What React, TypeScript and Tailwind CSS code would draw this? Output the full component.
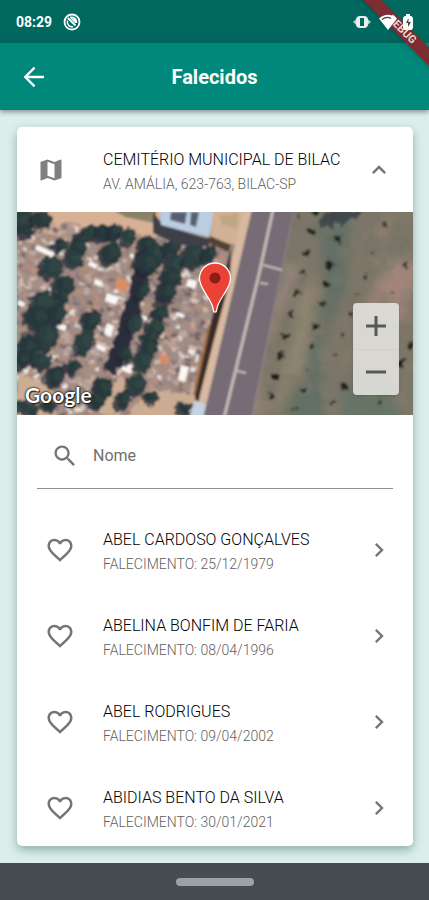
import React from "react";

type Person = { name: string; date: string };

const people: Person[] = [
  { name: "ABEL CARDOSO GONÇALVES", date: "25/12/1979" },
  { name: "ABELINA BONFIM DE FARIA", date: "08/04/1996" },
  { name: "ABEL RODRIGUES", date: "09/04/2002" },
  { name: "ABIDIAS BENTO DA SILVA", date: "30/01/2021" },
];

// Tree crowns: x, y, rx, ry
const trees: [number, number, number, number][] = [
  [24, 220, 12, 12], [42, 219, 12, 9], [26, 231, 10, 6],
  [92, 232, 9, 8], [104, 233, 9, 9], [116, 232, 9, 9], [129, 236, 8, 9], [82, 238, 8, 8],
  [78, 247, 10, 10], [75, 259, 10, 9], [112, 253, 11, 12], [61, 245, 6, 8], [52, 267, 12, 12],
  [65, 285, 11, 11], [62, 297, 9, 8], [44, 302, 13, 12], [38, 317, 13, 12], [58, 315, 9, 12],
  [48, 337, 12, 13], [29, 346, 11, 11], [24, 359, 9, 10], [42, 360, 11, 9], [56, 376, 10, 12],
  [92, 320, 10, 11], [85, 342, 10, 14], [74, 367, 8, 8],
  [148, 246, 10, 12], [157, 253, 11, 12], [147, 263, 13, 12], [172, 248, 9, 9], [176, 264, 11, 10],
  [172, 277, 12, 10], [167, 292, 11, 10], [195, 255, 12, 14], [210, 254, 8, 10],
  [143, 290, 7, 12], [136, 323, 8, 11], [126, 354, 9, 8],
  [161, 314, 9, 9], [156, 327, 10, 10], [151, 338, 10, 10], [149, 349, 10, 9], [144, 361, 10, 11],
  [104, 388, 11, 12], [97, 400, 8, 9], [138, 384, 11, 11], [124, 399, 8, 11], [152, 397, 8, 7],
  [28, 407, 13, 7], [50, 405, 9, 6], [186, 408, 9, 7],
];

// Shrubs on the field: x, y, radius
const shrubs: [number, number, number][] = [
  [311, 232, 4], [337, 239, 4], [306, 253, 3], [330, 265, 5], [303, 273, 3], [326, 284, 4],
  [297, 294, 3], [322, 304, 3], [291, 315, 4], [315, 327, 4], [286, 336, 4], [312, 346, 3],
  [280, 356, 4], [262, 365, 2], [276, 376, 4], [271, 396, 4], [303, 390, 3], [344, 386, 4],
  [332, 404, 2], [307, 369, 1], [343, 335, 2], [335, 354, 2], [350, 314, 2], [357, 295, 2],
  [365, 276, 2], [373, 253, 2], [406, 265, 4], [410, 345, 4], [401, 363, 4], [380, 403, 2],
  [393, 292, 2], [384, 225, 2], [298, 217, 2], [315, 212, 4], [295, 410, 2],
];

const graveColors = ["#c8aa9b", "#99847d", "#dcc4b5", "#ae8c7c", "#84767a", "#bda9a4", "#f0e8e3", "#a5928c", "#bd9080", "#6b5d60"];

function noise(n: number) {
  const v = Math.sin(n * 127.1 + 11.7) * 43758.5453;
  return v - Math.floor(v);
}

const graves = Array.from({ length: 1900 }, (_, i) => {
  const col = i % 38;
  const row = Math.floor(i / 38);
  return {
    x: col * 7 + noise(i) * 3,
    y: row * 5 + noise(i + 3000) * 2,
    w: 3 + noise(i + 6000) * 5,
    h: 2 + noise(i + 9000) * 2.5,
    fill: graveColors[Math.floor(noise(i + 700) * graveColors.length)],
  };
});

const patches = Array.from({ length: 260 }, (_, i) => ({
  x: 250 + noise(i + 51) * 165,
  y: 210 + noise(i + 922) * 206,
  r: 2 + noise(i + 77) * 9,
  fill: ["#6f7264", "#8d8173", "#617064", "#7a7364", "#a08578"][i % 5],
}));

function SatelliteMap() {
  return (
    <svg viewBox="17 212 396 203" preserveAspectRatio="xMidYMid slice" className="block h-full w-full" role="img" aria-label="Mapa">
      <defs>
        <filter id="soft" x="-5%" y="-5%" width="110%" height="110%">
          <feGaussianBlur stdDeviation="0.8" />
        </filter>
        <filter id="haze" x="-30%" y="-30%" width="160%" height="160%">
          <feGaussianBlur stdDeviation="5" />
        </filter>
        <filter id="rough" x="-5%" y="-5%" width="110%" height="110%">
          <feTurbulence type="fractalNoise" baseFrequency="0.16" numOctaves="2" seed="4" result="n" />
          <feDisplacementMap in="SourceGraphic" in2="n" scale="9" xChannelSelector="R" yChannelSelector="G" />
        </filter>
        <clipPath id="field">
          <path d="M295 208H420V420H252Z" />
        </clipPath>
        <clipPath id="cemetery">
          <path d="M10 228L70 222L150 236L226 255L192 420H10Z" />
        </clipPath>
      </defs>
      <g filter="url(#soft)">
        <rect x="10" y="205" width="410" height="220" fill="#a08b83" />
        <path d="M45 205H170L155 240L120 232L80 228L60 236L30 230Z" fill="#d8b096" />
        <path d="M110 208H157L154 223L125 217Z" fill="#8a8266" />
        <g clipPath="url(#cemetery)">
          <g transform="rotate(18 120 310) translate(-20 185)" filter="url(#rough)">
            {graves.map((g, i) => (
              <rect key={i} x={g.x} y={g.y} width={g.w} height={g.h} fill={g.fill} />
            ))}
          </g>
        </g>
        <g fill="#fbf7f5">
          <path d="M37 245l18 8-2 5-18-9zM90 261l8 4-2 4-8-4zM95 279l8 3-2 5-7-3zM107 293l12 4-3 8-11-4zM59 323l8 3-2 5-8-3zM107 323l7 3-3 11-7-3zM188 279l9 2-2 8-9-3zM138 314l10 3-2 4-9-3zM97 344l9 4-2 4-8-4zM177 312l8 3-2 3-8-3zM181 365l8 2-4 15-7-2zM123 362l11 4-3 8-10-4zM19 300l6 3-2 4-6-3zM131 253l6 3-2 4-5-3z" />
        </g>
        <path d="M117 277l12 4-2 11-12-3zM160 353l10 4-2 7-9-3z" fill="#d98c69" />
        <g filter="url(#rough)">
          <path d="M17 372L38 381L60 396L55 418H17ZM90 405L118 378L130 382L112 418ZM150 388L200 397L196 418H125Z" fill="#ccad93" />
          <path d="M138 250L156 256L130 345L115 375L103 370L126 305Z" fill="#2c2d3b" />
          <path d="M167 265L182 268L168 310L145 372L139 365L152 310Z" fill="#2d3338" opacity="0.8" />
          <path d="M20 335L60 305L48 356L26 370Z" fill="#27343a" opacity="0.5" />
          {trees.map(([x, y, rx, ry], i) => (
            <g key={i} transform={`rotate(20 ${x} ${y})`}>
              <ellipse cx={x - 2} cy={y + 3} rx={rx} ry={ry} fill="#262c38" opacity="0.8" />
              <ellipse cx={x} cy={y} rx={rx - 1} ry={ry - 1} fill={i % 3 === 0 ? "#2b3f3f" : "#26373a"} />
              <ellipse cx={x + 2} cy={y - 2} rx={rx / 2} ry={ry / 2} fill="#3b504c" opacity="0.35" />
            </g>
          ))}
        </g>
        <path d="M153 212L163 225L205 238H213L208 246L178 245L153 233Z" fill="#3d4048" />
        <path d="M160 205H216L209 237L161 225Z" fill="#b9cee2" />
        <path d="M171 212H187L185 224L170 220ZM191 212H199L196 227L190 225Z" fill="#59606f" />
        <path d="M214 205H254L240 246L210 239Z" fill="#d2b195" />
        <path d="M219 216L239 213L237 228L222 225Z" fill="#ad9d72" opacity="0.5" />
        <path d="M210 236L231 245L228 252L209 243Z" fill="#514332" />
        {/* Pavement and avenue */}
        <path d="M245 205H256L208 418H192L228 275Z" fill="#d8b9a1" />
        <path d="M231 247L224 275L211 322L195 395L196 415L200 395L214 340L230 280Z" fill="#3c2c25" />
        <path d="M209 325L194 395" stroke="#a66f3b" strokeWidth="2" />
        <path d="M195 400L207 405L204 418H189Z" fill="#c4d3e1" />
        <path d="M253 205H297L252 418H203L211 385Z" fill="#776c75" />
        <path d="M274 205L260 270L224 418" fill="none" stroke="#cabbb7" strokeWidth="3" />
        <path d="M295 208L252 418" stroke="#93838a" strokeWidth="2" />
        <path d="M263 265L282 270M260 283L268 284M237 371L246 373" stroke="#c9bdbb" strokeWidth="2" />
        {/* Field beyond the avenue */}
        <g clipPath="url(#field)">
          <rect x="250" y="205" width="170" height="215" fill="#7c7668" />
          <g filter="url(#haze)">
            <path d="M318 215L352 205L345 290L320 345L325 420L285 418L325 300Z" fill="#626f65" />
            <path d="M390 255L420 265L405 320L360 320Z" fill="#a2857a" />
            <path d="M340 390L380 375L410 420H340Z" fill="#667366" />
            <path d="M300 290L318 265L305 370L275 410Z" fill="#8d846f" />
            <path d="M285 260L300 270L265 350L258 420L245 418Z" fill="#96837b" />
          </g>
          <g filter="url(#rough)">
            {patches.map((p, i) => (
              <circle key={i} cx={p.x} cy={p.y} r={p.r} fill={p.fill} opacity="0.16" />
            ))}
            <path d="M320 220l7-9h34l-5 9-9-2-4 9-7-5-6 9-2-7-8 5z" fill="#393d46" opacity="0.8" />
            {shrubs.map(([x, y, r], i) => (
              <g key={i}>
                <ellipse cx={x} cy={y} rx={r} ry={r * 0.9} fill="#352f2b" opacity="0.7" />
                <circle cx={x} cy={y} r={r * 0.7} fill="#1e1d1b" />
              </g>
            ))}
          </g>
        </g>
      </g>
      {/* Location pin */}
      <path
        d="M215 263c-8.800 0-15.500 6.900-15.500 15.500 0 6 3 10 7 16.500 4 6 6.500 11 7 15.500 0 2.300 3 2.300 3 0 .5-4.500 3-9.500 7-15.500 4-6.500 7-10.500 7-16.500 0-8.600-6.700-15.500-15.500-15.500z"
        fill="#ea4335"
        stroke="#fff"
        strokeWidth="1.300"
      />
      <circle cx="215" cy="278" r="5.500" fill="#8c1d18" />
    </svg>
  );
}

function StatusBar() {
  return (
    <div className="flex h-[43px] shrink-0 items-center bg-[#00685f] px-4 text-white">
      <span className="text-sm font-bold">08:29</span>
      <svg viewBox="0 0 18 18" className="ml-[11px] size-[18px]" fill="none" stroke="currentColor" aria-hidden="true">
        <circle cx="9" cy="9" r="7.500" strokeWidth="1.800" />
        <path d="M4.500 7.500A5 5 0 0 0 10 13.800M7 4.500A5 5 0 0 1 13.500 10" strokeWidth="1.500" />
        <path d="M4.800 5L12.500 12.500" strokeWidth="1.800" />
        <path d="M8 5.500L12.500 10V6.500Z" fill="currentColor" strokeWidth="1" />
      </svg>
      <div className="relative z-20 ml-auto flex items-center">
        <svg viewBox="0 0 18 14" className="mr-2 h-3.5 w-[18px]" aria-hidden="true">
          <path d="M0 7l4-3.500v7zM18 7l-4-3.500v7z" fill="#b5d3cf" />
          <rect x="3" y="1" width="12" height="12" rx="4" fill="#e6f1ef" />
          <rect x="7" y="3" width="4" height="8" fill="#00685f" />
        </svg>
        <svg viewBox="0 0 18 16" className="h-4 w-[18px]" aria-hidden="true">
          <path d="M0 4.500Q9-3 18 4.500L9 16Z" fill="#fff" />
          <path d="M3 5.500Q8 2 12 4.500" fill="none" stroke="#632f34" strokeWidth="1.300" />
        </svg>
        <svg viewBox="0 0 10 16" className="ml-1.5 h-4 w-2.5" aria-hidden="true">
          <path d="M3 0h4v2h1.500l1.500 2v10l-1.500 2h-7L0 14V4l1.500-2H3Z" fill="#fff" />
          <path d="M5.500 4L3 9h2v4l3-5H5.500Z" fill="#31514f" />
        </svg>
      </div>
    </div>
  );
}

function HeartIcon() {
  return (
    <svg viewBox="0 0 24 24" className="size-[30px]" fill="currentColor" aria-hidden="true">
      <path d="M16.500 3c-1.740 0-3.410.81-4.500 2.090C10.910 3.810 9.240 3 7.500 3 4.420 3 2 5.420 2 8.500c0 3.780 3.400 6.860 8.550 11.540L12 21.350l1.450-1.320C18.600 15.360 22 12.280 22 8.500 22 5.420 19.580 3 16.500 3zm-4.400 15.550l-.1.100-.1-.1C7.140 14.240 4 11.390 4 8.500 4 6.500 5.500 5 7.500 5c1.540 0 3.040.99 3.570 2.360h1.870C13.460 5.990 14.960 5 16.500 5c2 0 3.500 1.500 3.500 3.500 0 2.890-3.140 5.740-7.900 10.050z" />
    </svg>
  );
}

function TwoLines({ title, detail }: { title: string; detail: string }) {
  return (
    <span className="min-w-0 flex-1 pt-1">
      <span className="block text-base leading-6 font-light whitespace-nowrap text-black">{title}</span>
      <span className="block text-sm leading-6 font-light text-[#5f5f5f]">{detail}</span>
    </span>
  );
}

export default function App() {
  return (
    <div className="relative flex h-screen flex-col overflow-hidden bg-[#dceeeb] font-[Roboto,sans-serif]">
      <StatusBar />
      <div className="pointer-events-none absolute top-0 right-0 size-20 overflow-hidden">
        <div className="absolute top-[23px] left-[-7px] h-[13px] w-[120px] rotate-45 bg-[#7d2c32] text-center text-[11px] leading-[13px] font-bold text-[#e5d5d5] shadow-md">
          DEBUG
        </div>
      </div>

      <header className="grid h-[67px] shrink-0 grid-cols-[68px_1fr_68px] items-center bg-[#00897b] shadow-[0_2px_5px_rgba(0,0,0,0.4)]">
        <button type="button" aria-label="Voltar" className="flex h-12 items-center justify-center text-white">
          <svg viewBox="0 0 24 24" className="size-7" fill="none" stroke="currentColor" strokeWidth="2" aria-hidden="true">
            <path d="M20.500 12H5M12.500 4L4.500 12l8 8" />
          </svg>
        </button>
        <h1 className="text-center text-xl font-bold text-white">Falecidos</h1>
      </header>

      <main className="flex min-h-0 flex-1 flex-col py-[17px] pr-4 pl-[17px]">
        <section className="flex min-h-0 flex-1 flex-col overflow-hidden rounded-[5px] bg-white shadow-[0_4px_10px_rgba(0,60,50,0.35)]">
          <button type="button" aria-expanded="true" className="flex h-[85px] w-full shrink-0 items-center gap-[38px] px-5 text-left">
            <svg viewBox="0 0 24 24" className="size-7 text-[#808080]" fill="currentColor" aria-hidden="true">
              <path d="M20.500 3l-.16.030L15 5.100 9 3 3.360 4.900c-.21.070-.36.250-.36.480V20.500c0 .28.220.5.500.5l.16-.030L9 18.900l6 2.100 5.640-1.900c.21-.070.360-.25.360-.48V3.500c0-.28-.22-.5-.5-.5zM15 19l-6-2.110V5l6 2.110V19z" />
            </svg>
            <TwoLines title="CEMITÉRIO MUNICIPAL DE BILAC" detail="AV. AMÁLIA, 623-763, BILAC-SP" />
            <svg viewBox="0 0 24 24" className="-ml-[38px] size-7 text-[#757575]" fill="currentColor" aria-hidden="true">
              <path d="M12 8l-6 6 1.410 1.410L12 10.830l4.590 4.580L18 14z" />
            </svg>
          </button>

          <div className="relative h-[203px] shrink-0 overflow-hidden">
            <SatelliteMap />
            <span className="absolute bottom-2 left-2 font-[Lato,sans-serif] text-[21px] leading-6 font-bold text-white [text-shadow:0_0_2px_#000,0_0_2px_#000,1px_1px_1px_#333]">
              Google
            </span>
            <div className="absolute right-3.5 bottom-5 flex h-[92px] w-[46px] flex-col rounded-sm bg-[#e2e2de]/90 shadow">
              <button type="button" aria-label="Aumentar zoom" className="flex flex-1 items-center justify-center border-b border-[#cfcfcc] text-[#585858]">
                <svg viewBox="0 0 20 20" className="size-5" stroke="currentColor" strokeWidth="3" aria-hidden="true">
                  <path d="M10 0v20M0 10h20" />
                </svg>
              </button>
              <button type="button" aria-label="Diminuir zoom" className="flex flex-1 items-center justify-center text-[#585858]">
                <svg viewBox="0 0 20 20" className="size-5" stroke="currentColor" strokeWidth="3" aria-hidden="true">
                  <path d="M0 10h20" />
                </svg>
              </button>
            </div>
          </div>

          <div className="mx-5 flex h-[74px] shrink-0 items-center border-b border-[#8f8f8f] pt-2">
            <svg viewBox="0 0 24 24" className="ml-3.5 size-7 text-[#757575]" fill="currentColor" aria-hidden="true">
              <path d="M15.500 14h-.79l-.28-.27C15.410 12.590 16 11.110 16 9.500 16 5.910 13.090 3 9.500 3S3 5.910 3 9.500 5.910 16 9.500 16c1.610 0 3.090-.59 4.230-1.570l.27.280v.79l5 4.990L20.490 19l-4.990-5zm-6 0C7.010 14 5 11.990 5 9.500S7.010 5 9.500 5 14 7.010 14 9.500 11.990 14 9.500 14z" />
            </svg>
            <input
              type="text"
              aria-label="Nome"
              placeholder="Nome"
              className="ml-3.5 min-w-0 flex-1 bg-transparent text-base text-[#222] outline-none placeholder:text-[#6f6f6f]"
            />
          </div>

          <ul className="mt-[18px] min-h-0 flex-1 overflow-y-auto [scrollbar-width:none]">
            {people.map((p) => (
              <li key={p.name} className="flex h-[86px] items-center pr-5 pl-7 text-[#757575]">
                <button type="button" aria-label={`Favoritar ${p.name}`}>
                  <HeartIcon />
                </button>
                <a href="#detalhes" className="ml-7 flex min-w-0 flex-1 items-center">
                  <TwoLines title={p.name} detail={`FALECIMENTO: ${p.date}`} />
                  <svg viewBox="0 0 24 24" className="size-7" fill="currentColor" aria-hidden="true">
                    <path d="M10 6L8.590 7.410 13.170 12l-4.580 4.590L10 18l6-6z" />
                  </svg>
                </a>
              </li>
            ))}
          </ul>
        </section>
      </main>

      <footer className="flex h-[37px] shrink-0 items-center justify-center bg-[#454c52]">
        <div className="h-2 w-[78px] rounded-full bg-[#9fa2a5]" />
      </footer>
    </div>
  );
}
